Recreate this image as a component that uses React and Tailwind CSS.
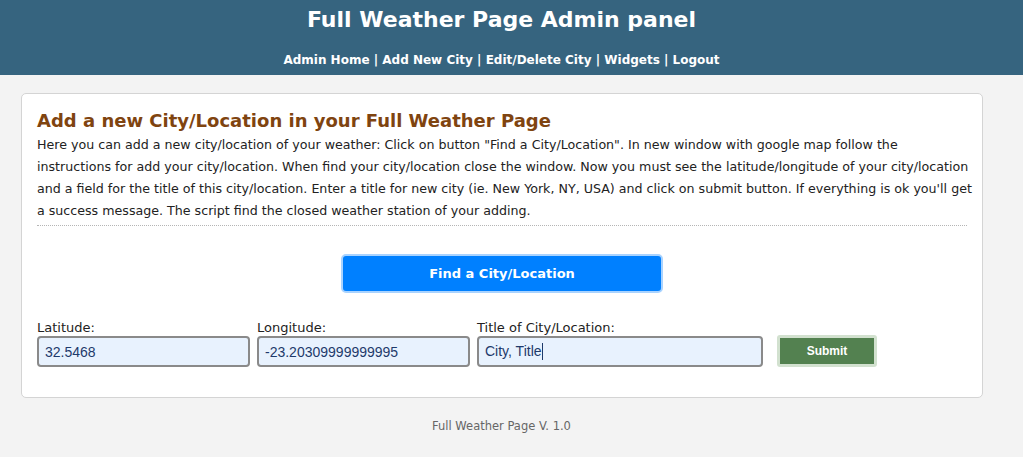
import React from 'react';

const App = () => {
  const links = ['Admin Home', 'Add New City', 'Edit/Delete City', 'Widgets', 'Logout'];

  return (
    <div className="min-h-[457px] bg-[#f3f3f3] font-['DejaVu_Sans',sans-serif] text-[#222]">
      {/* Header */}
      <div className="h-[75px] bg-[#36647f] text-white text-center pr-[20px]">
        <h1 className="pt-[5px] text-[22px] leading-[30px] font-bold">
          Full Weather Page Admin panel
        </h1>
        <div className="mt-[17px] text-[12px] leading-[16px] font-bold">
          {links.map((l, i) => (
            <span key={l}>
              {i > 0 && ' | '}
              <a href="#" className="text-white">{l}</a>
            </span>
          ))}
        </div>
      </div>

      {/* Main card */}
      <div className="ml-[21px] mr-[40px] mt-[18px] bg-white border border-[#d4d4d4] rounded-[5px] px-[15px] pt-[14px] pb-[30px]">
        <h2 className="text-[18px] leading-[26px] font-bold text-[#7f4410]">
          Add a new City/Location in your Full Weather Page
        </h2>
        <p className="text-[12.65px] leading-[22px] text-[#222] pb-[3px] -mr-[8px]">
          Here you can add a new city/location of your weather: Click on button "Find a City/Location". In new window with google map follow the instructions for add your city/location. When find your city/location close the window. Now you must see the latitude/longitude of your city/location and a field for the title of this city/location. Enter a title for new city (ie. New York, NY, USA) and click on submit button. If everything is ok you'll get a success message. The script find the closed weather station of your adding.
        </p>
        <div className="border-b border-dotted border-[#b5b5b5]" />

        <div className="flex justify-center mt-[28px]">
          <button className="w-[322px] h-[39px] bg-[#0080ff] border-2 border-[#a9d3ff] rounded-[5px] text-white text-[13px] font-bold">
            Find a City/Location
          </button>
        </div>

        <div className="flex items-end mt-[27px] gap-[7px]">
          <div className="flex flex-col w-[213px]">
            <label className="text-[13px] leading-[16px]">Latitude:</label>
            <input readOnly value="32.5468" className="h-[31px] bg-[#e8f2fe] border-2 border-double border-[#8a8a8a] rounded-[4px] px-[6px] text-[14px] text-[#1e3a6b] font-['Liberation_Sans',sans-serif] outline-none" />
          </div>
          <div className="flex flex-col w-[213px]">
            <label className="text-[13px] leading-[16px]">Longitude:</label>
            <input readOnly value="-23.20309999999995" className="h-[31px] bg-[#e8f2fe] border-2 border-double border-[#8a8a8a] rounded-[4px] px-[6px] text-[14px] text-[#1e3a6b] font-['Liberation_Sans',sans-serif] outline-none" />
          </div>
          <div className="flex flex-col w-[286px]">
            <label className="text-[13px] leading-[16px]">Title of City/Location:</label>
            <div className="h-[31px] bg-[#e8f2fe] border-2 border-double border-[#8a8a8a] rounded-[4px] px-[6px] flex items-center text-[14px] text-[#1e3a6b] font-['Liberation_Sans',sans-serif]">
              City, Title<span className="inline-block w-px h-[17px] bg-[#1e3a6b]" />
            </div>
          </div>
          <button className="ml-[7px] w-[100px] h-[32px] bg-[#538150] border-[3px] border-[#d2e1cf] rounded-[3px] text-white text-[12px] font-bold font-['Liberation_Sans',sans-serif]">
            Submit
          </button>
        </div>
      </div>

      {/* Footer */}
      <div className="text-center text-[11.5px] text-[#666] mt-[20px] pr-[20px]">
        Full Weather Page V. 1.0
      </div>
    </div>
  );
};

export default App;
